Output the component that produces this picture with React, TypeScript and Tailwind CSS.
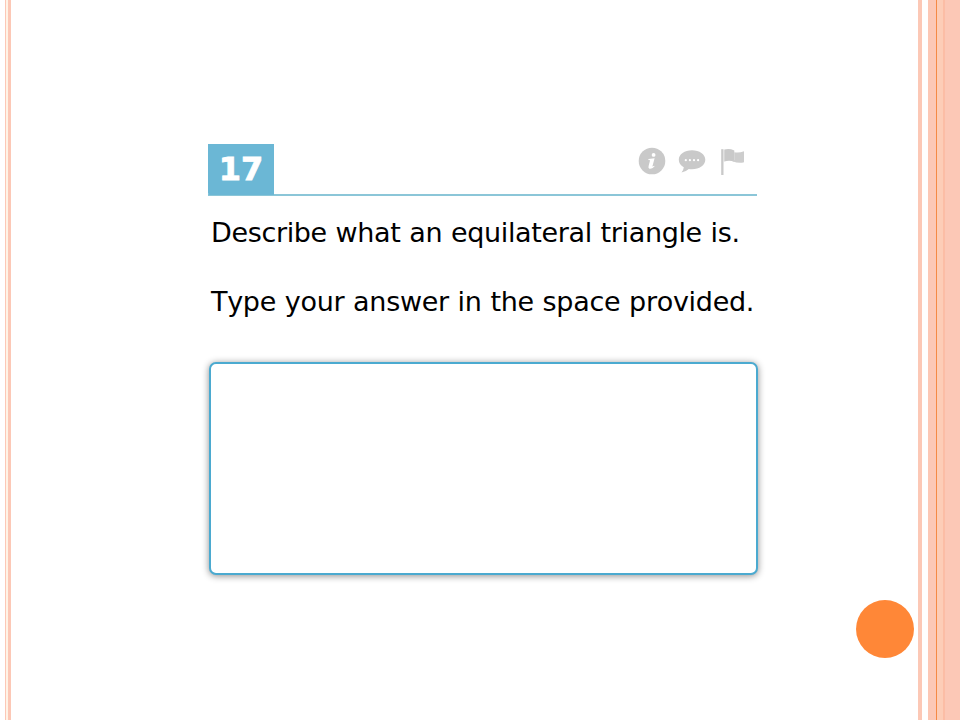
import React from 'react';

const InfoIcon = () => (
  <svg width="28" height="28" viewBox="0 0 28 28" aria-hidden="true">
    <circle cx="14" cy="14" r="13.3" fill="#c9c9c9" />
    <circle cx="15.6" cy="7.9" r="1.9" fill="#fff" />
    <path d="M10.5 12.1 16.6 11.3 14.5 18.9Q14.2 20.3 16.2 18.8L16.5 19.6Q13.5 22.4 11.4 21.7 10 21.1 10.6 19L12.1 13.2 10.3 12.9Z" fill="#fff" />
  </svg>
);

const CommentIcon = () => (
  <svg width="28" height="28" viewBox="0 0 28 28" aria-hidden="true">
    <path d="M14 3.3C21.4 3.3 27.3 7.3 27.3 12.8S21.4 22.3 14 22.3Q12.4 22.3 10.8 22.1 7.5 25.2 3.5 25.4 5.6 23.2 5.8 20.3C2.5 18.5.8 16 .8 12.8 .8 7.3 6.6 3.3 14 3.3Z" fill="#c9c9c9" />
    {[7.8, 11.9, 16, 20.1].map(x => (
      <circle key={x} cx={x} cy="13.2" r="1.1" fill="#fff" />
    ))}
  </svg>
);

const FlagIcon = () => (
  <svg width="28" height="28" viewBox="0 0 28 28" aria-hidden="true">
    <path d="M3.2 2.2H5.5V28H3.2Z" fill="#c9c9c9" />
    <path d="M5.5 3.2H6.3V14.6H5.5Z" fill="#dedede" />
    <path d="M6.3 2.6Q11 1 16.3 3.4V14.8Q11.3 12.8 6.3 14.6Z" fill="#c9c9c9" />
    <path d="M16.3 5.2Q21 6.2 26 4.2V15.2Q20.8 16.6 14.5 14.2L16.3 13Z" fill="#cdcdcd" />
  </svg>
);

const LeftStripes = () => (
  <div className="flex h-full w-[11px] shrink-0 pl-[5px]">
    <div className="w-px bg-[#fcc8b6]" />
    <div className="w-[2px] bg-[#fff3e6]" />
    <div className="w-[3px] bg-[#fcc8b6]" />
  </div>
);

const RightStripes = () => (
  <div className="ml-auto flex h-full w-[42px] shrink-0">
    <div className="mr-[6px] w-[4px] bg-[#fcc8b6]" />
    <div className="w-[8px] bg-[#fcc8b6]" />
    <div className="w-px bg-[#f58a45]" />
    <div className="w-[6px] bg-[#fdcdb7]" />
    <div className="w-[2px] bg-[#fcbda5]" />
    <div className="flex-1 bg-[#fcc8b6]" />
  </div>
);

const App: React.FC = () => {
  return (
    <div className="relative flex h-[720px] w-[960px] overflow-hidden bg-white">
      <LeftStripes />

      <main className="ml-[197px] w-[550px] pt-[144px] font-['DejaVu_Sans',Verdana,sans-serif] text-black">
        <header className="flex h-[52px] w-[549px] justify-between border-b-2 border-[#8bc6d8]">
          <div className="flex h-[51px] w-[66px] items-center justify-center rounded-bl-[2px] bg-[#6bb7d5] pb-px text-[32px] font-bold text-white [-webkit-text-stroke:0.8px_white]">
            17
          </div>
          <div className="flex gap-[12px] pt-[3px] pr-[11px]">
            <InfoIcon />
            <CommentIcon />
            <FlagIcon />
          </div>
        </header>

        <p className="mt-[19px] ml-[3px] h-[36px] text-[27px] leading-[36px] tracking-[-0.35px] [word-spacing:0.5px] whitespace-nowrap">
          Describe what an equilateral triangle is.
        </p>
        <p className="mt-[33px] ml-[3px] h-[36px] text-[27px] leading-[36px] tracking-[-0.3px] [font-kerning:none] [word-spacing:0.5px] whitespace-nowrap">
          Type your answer in the space provided.
        </p>

        <textarea
          aria-label="Answer"
          className="mt-[42px] ml-px block h-[213px] w-[549px] resize-none rounded-[7px] border-2 border-[#4baad0] bg-white shadow-[0_1px_7px_rgba(0,0,0,0.45)] outline-none"
        />
      </main>

      <RightStripes />
      <div className="absolute top-[600px] left-[856px] size-[58px] rounded-full bg-[#ff8737]" />
    </div>
  );
};

export default App;
